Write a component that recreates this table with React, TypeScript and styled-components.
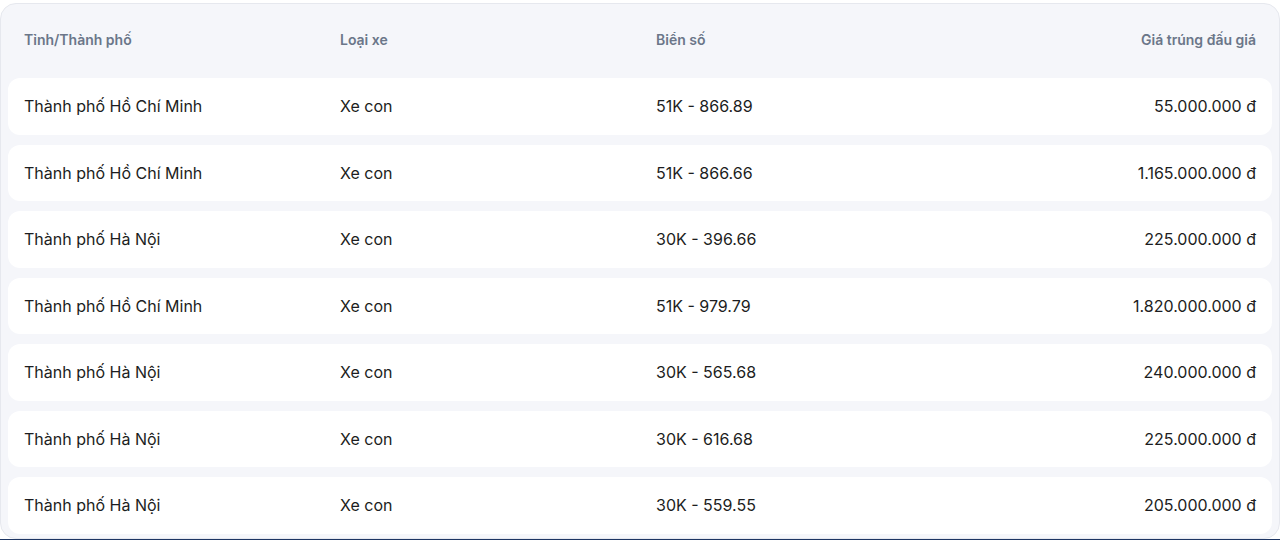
import React from 'react';
import styled, { createGlobalStyle } from 'styled-components';

const GlobalStyle = createGlobalStyle`
  html, body {
    margin: 0;
    padding: 0;
    background: #ffffff;
    font-family: Inter, 'Noto Sans', sans-serif;
  }
`;

const Page = styled.div`
  width: 1280px;
  height: 540px;
  overflow: hidden;
  display: flex;
  flex-direction: column;
  padding-top: 3px;
  box-sizing: border-box;
`;

/* bảng kết quả */
const Board = styled.div`
  background: #f5f6fa;
  border: 1px solid #e6e8ee;
  border-radius: 16px;
  padding: 0 7px 4px;
  display: flex;
  flex-direction: column;
  gap: 10px;
`;

const Header = styled.div`
  display: grid;
  grid-template-columns: repeat(4, 1fr);
  padding: 26px 0 18px;
`;

const HeadCell = styled.div<{ $right?: boolean }>`
  padding: 0 16px;
  font-size: 14px;
  line-height: 20px;
  font-weight: 600;
  color: #6b7689;
  text-align: ${(p) => (p.$right ? 'right' : 'left')};
`;

const Row = styled.div`
  display: grid;
  grid-template-columns: repeat(4, 1fr);
  align-items: center;
  height: 56.5px;
  background: #ffffff;
  border-radius: 12px;
`;

const Cell = styled.div<{ $right?: boolean }>`
  padding: 0 16px;
  font-size: 16px;
  line-height: 22px;
  color: #1c1d21;
  text-align: ${(p) => (p.$right ? 'right' : 'left')};
`;

const Footer = styled.div`
  margin-top: auto;
  height: 2px;
  background: #1d3563;
`;

const rows = [
  ['Thành phố Hồ Chí Minh', 'Xe con', '51K - 866.89', '55.000.000 đ'],
  ['Thành phố Hồ Chí Minh', 'Xe con', '51K - 866.66', '1.165.000.000 đ'],
  ['Thành phố Hà Nội', 'Xe con', '30K - 396.66', '225.000.000 đ'],
  ['Thành phố Hồ Chí Minh', 'Xe con', '51K - 979.79', '1.820.000.000 đ'],
  ['Thành phố Hà Nội', 'Xe con', '30K - 565.68', '240.000.000 đ'],
  ['Thành phố Hà Nội', 'Xe con', '30K - 616.68', '225.000.000 đ'],
  ['Thành phố Hà Nội', 'Xe con', '30K - 559.55', '205.000.000 đ'],
];

const App = (): JSX.Element => (
  <>
    <GlobalStyle />
    <Page>
      <Board>
        <Header>
          <HeadCell>Tỉnh/Thành phố</HeadCell>
          <HeadCell>Loại xe</HeadCell>
          <HeadCell>Biển số</HeadCell>
          <HeadCell $right>Giá trúng đấu giá</HeadCell>
        </Header>
        {rows.map((r, i) => (
          <Row key={i}>
            <Cell>{r[0]}</Cell>
            <Cell>{r[1]}</Cell>
            <Cell>{r[2]}</Cell>
            <Cell $right>{r[3]}</Cell>
          </Row>
        ))}
      </Board>
      <Footer />
    </Page>
  </>
);

export default App;
